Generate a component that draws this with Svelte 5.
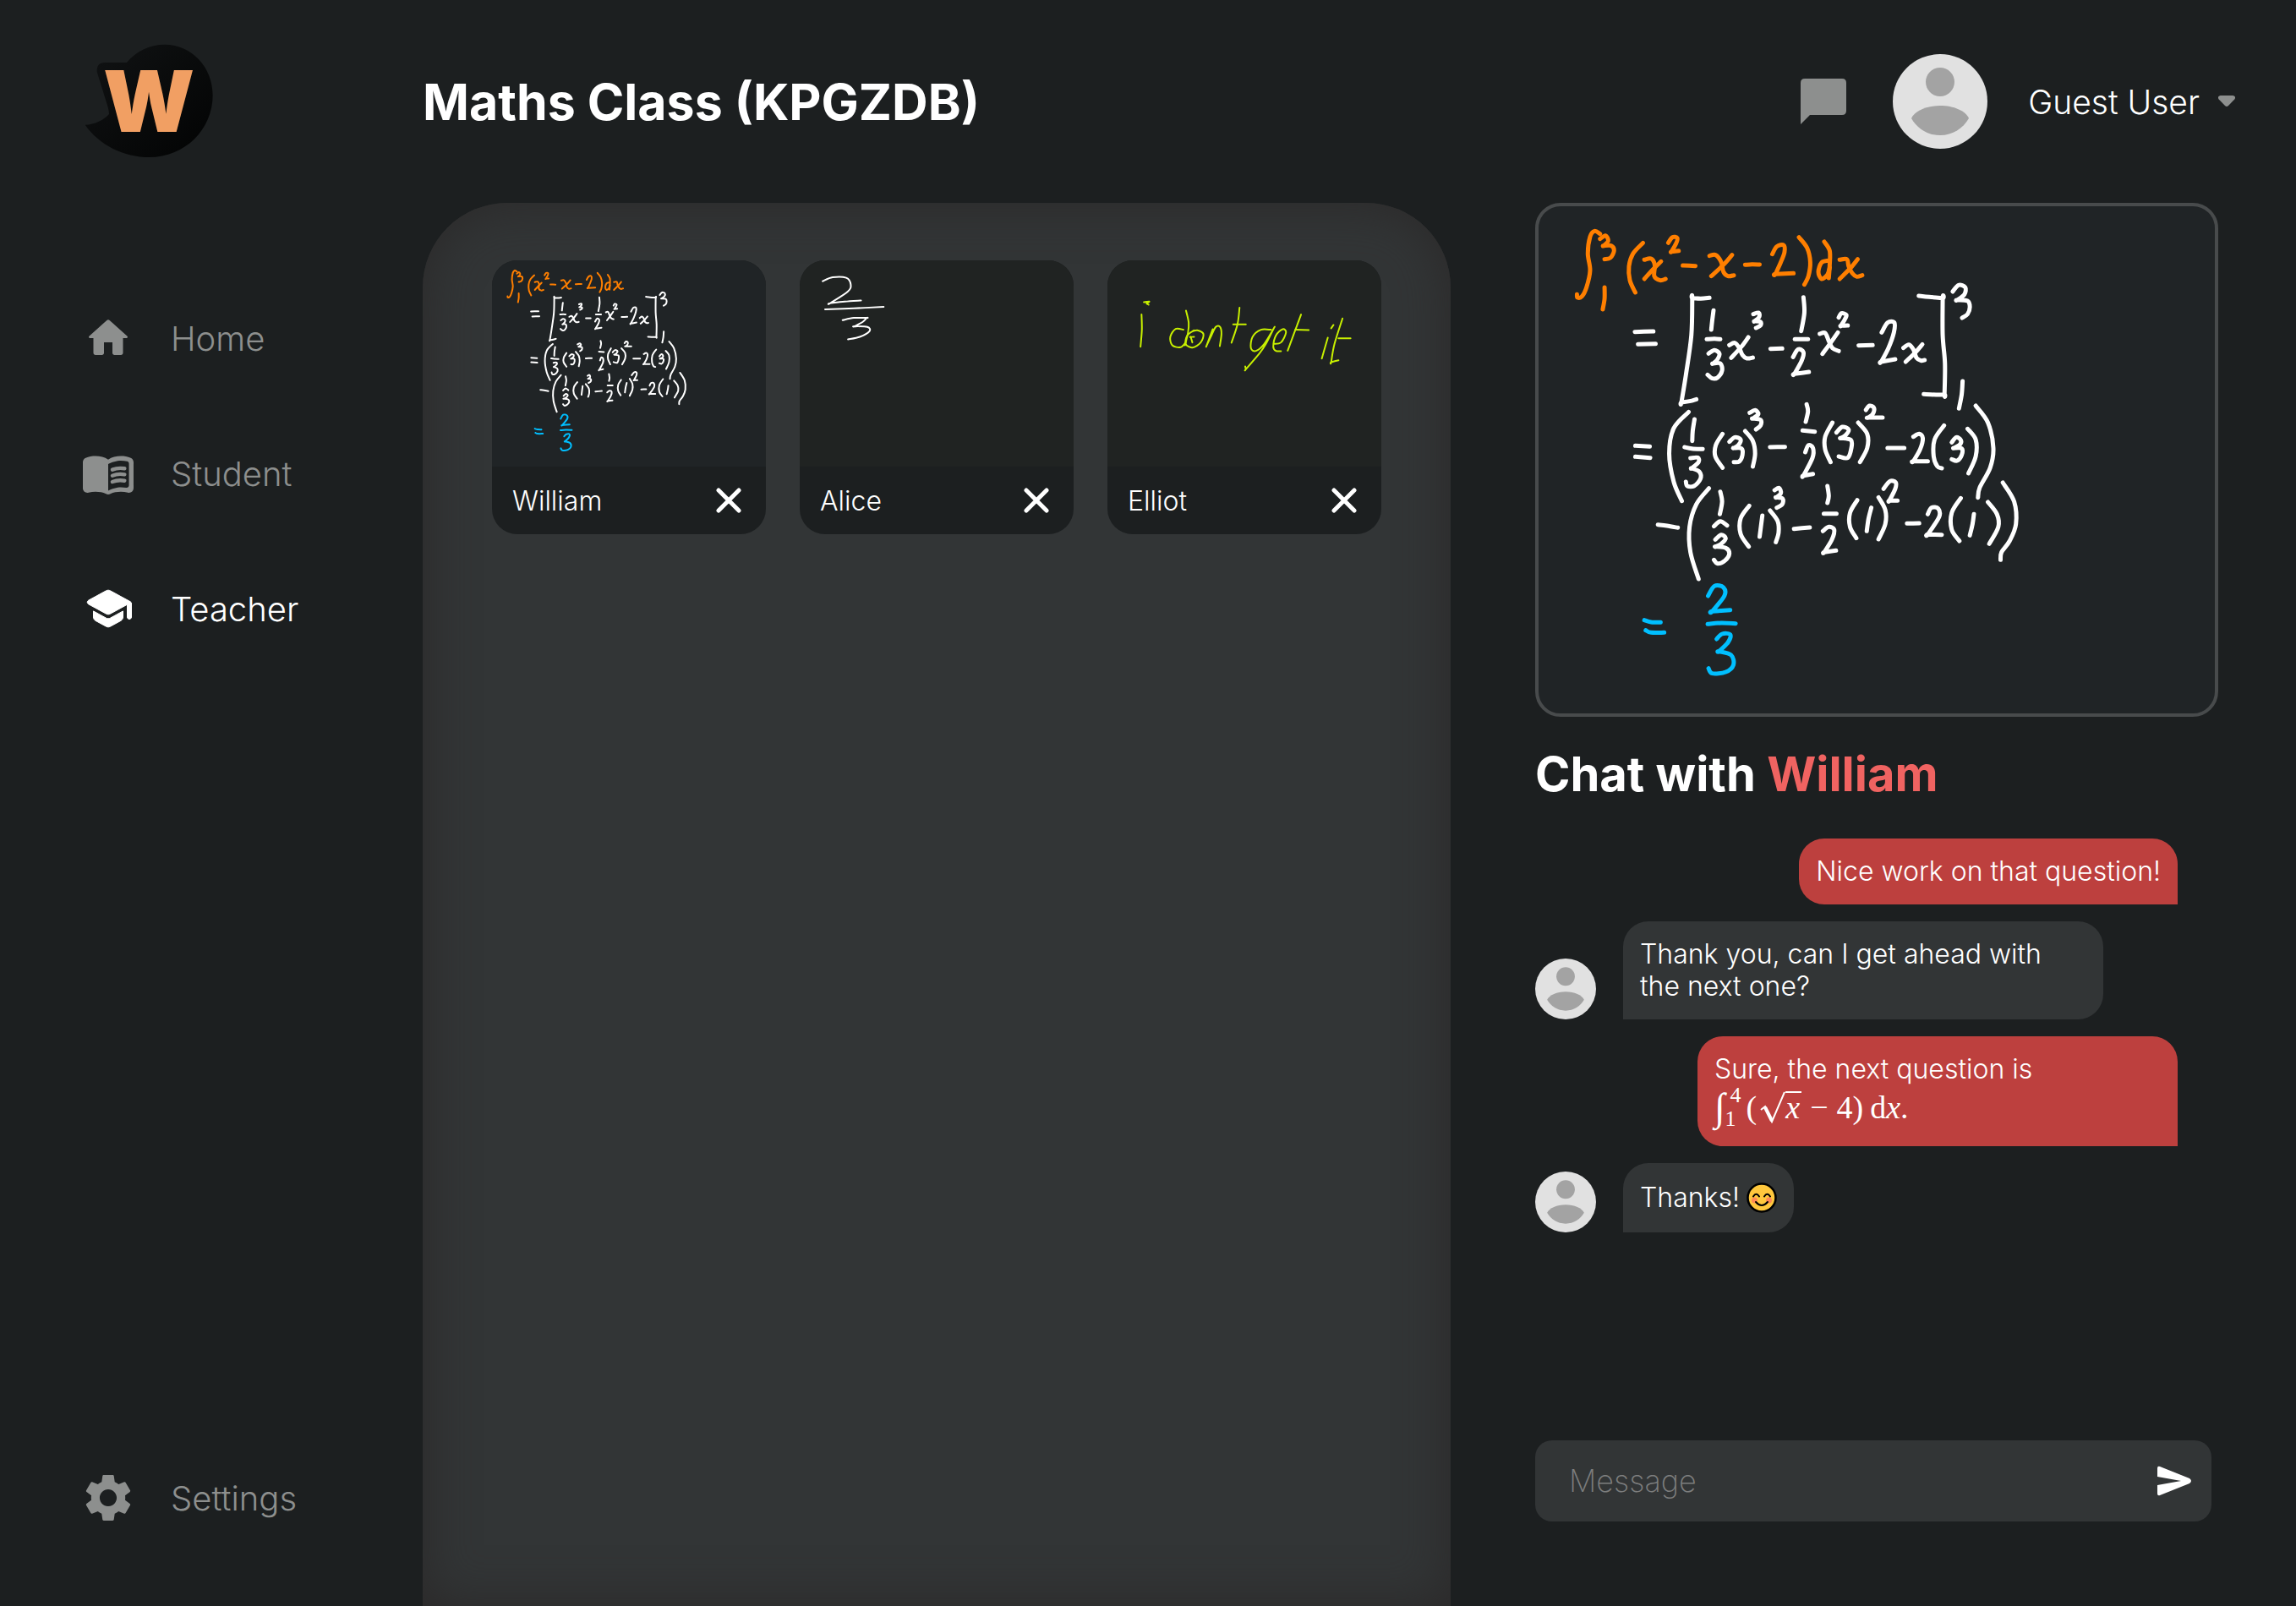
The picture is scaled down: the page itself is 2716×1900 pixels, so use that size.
<script>
  // Ink strokes are space separated "x,y" points; a doubled point makes a sharp corner.
  const williamInk = [
    {
      colour: 'orange',
      strokes: [
        '172,140 160,130 150,150 145,210 150,270 142,330 132,362 122,366 121,355',
        '172,158 184,146 190,165 180,182 180,182 197,182 203,200 195,225 182,230',
        '182,330 182,370 178,408',
        '267,172 245,210 236,255 238,305 250,348',
        '270,232 285,228 293,250 292,290 305,305 317,300',
        '307,238 290,265 270,300',
        '323,172 332,152 343,155 340,175 330,203 330,203 346,200',
        '355,252 383,254',
        '414,218 428,215 440,240 445,275 455,290 468,287',
        '464,215 445,250 418,290',
        '493,250 508,248 525,249',
        '553,212 563,185 578,180 580,205 572,240 560,283 560,283 600,280',
        '612,152 630,190 637,240 633,290 624,320',
        '668,168 680,200 680,250 678,297',
        '677,235 662,242 655,275 662,300 675,285 680,260',
        '702,232 718,230 722,255 730,280 740,292 752,287',
        '742,230 728,258 702,300'
      ]
    },
    {
      colour: 'white',
      strokes: [
        '249,488 290,486', '256,532 295,530',
        '414,367 395,370 376,368 376,368 374,500 362,640 352,738 352,738 370,734 385,727',
        '423,412 420,450 418,480', '408,514 425,512 438,514',
        '412,565 425,553 436,565 432,585 422,600 422,600 438,600 442,625 432,650 420,653 410,640',
        '458,535 470,527 480,545 487,570 497,582 510,579', '500,507 485,540 462,580',
        '511,425 523,420 524,435 514,450 514,450 527,452 527,465 517,474',
        '549,548 575,547',
        '622,365 624,420 617,485', '603,514 632,514',
        '599,577 610,550 622,560 618,590 602,637 602,637 634,630',
        '658,495 670,492 678,520 686,545 700,556', '698,490 685,520 664,566',
        '700,437 706,422 717,428 713,445 705,466 705,466 720,465',
        '744,536 775,535',
        '795,490 808,455 823,455 822,490 810,545 794,594 794,594 825,585',
        '843,545 855,533 865,550 872,580 882,590 890,588', '885,532 870,560 848,594',
        '877,360 900,364 930,368 930,368 930,500 935,600 934,710 934,710 915,711 888,709',
        '952,345 965,322 980,330 978,355 962,375 962,375 985,378 990,400 985,425 973,438',
        '974,663 972,710 966,760',

        '250,892 282,895', '250,931 283,935',
        '368,772 335,830 325,920 335,1020 353,1088',
        '381,798 377,840 376,875', '359,897 375,902 399,904',
        '372,936 388,934 390,950 375,972 375,972 392,985 394,1010 380,1035 365,1035 362,1020',
        '443,850 428,890 427,930 443,970',
        '458,878 470,862 483,870 478,890 468,900 468,900 485,902 487,925 480,948 468,950',
        '493,840 510,875 515,920 510,966',
        '503,775 515,766 522,780 510,795 510,795 527,800 527,820 517,834',
        '548,897 581,896',
        '629,745 632,770 627,807', '620,838 647,842',
        '626,915 633,890 643,900 642,935 622,998 622,998 643,992',
        '686,810 670,860 670,905 682,950',
        '695,845 708,825 722,835 715,855 705,865 705,865 727,872 728,900 720,935 700,930',
        '743,810 763,850 763,900 747,950',
        '760,765 768,750 778,758 775,780 765,792 765,792 797,792',
        '808,900 845,900',
        '865,860 878,850 886,865 880,905 865,947 865,947 897,947',
        '933,820 912,870 910,930 918,965 928,972',
        '950,880 960,862 970,872 968,888 955,900 955,900 972,902 972,925 962,945 950,940',
        '985,832 1003,870 1003,930 987,990',
        '1003,750 1030,810 1042,900 1035,970 1012,1040 1008,1076',

        '300,1172 320,1176 344,1183',
        '413,1043 385,1100 370,1180 372,1270 390,1365',
        '438,1055 442,1090 437,1135', '424,1178 438,1160 453,1175',
        '427,1225 440,1208 450,1220 440,1240 428,1250 428,1250 450,1255 458,1275 448,1300 432,1310 424,1297',
        '502,1105 483,1150 483,1205 501,1250', '531,1140 525,1215',
        '548,1122 565,1160 567,1200 561,1234',
        '558,1050 568,1042 572,1060 562,1075 562,1075 576,1080 575,1100 563,1112',
        '601,1187 636,1182',
        '675,1035 678,1070 675,1095', '667,1133 695,1133',
        '665,1195 678,1180 690,1190 685,1225 668,1270 668,1270 694,1264',
        '741,1085 725,1130 725,1180 739,1220', '772,1112 766,1150 762,1195',
        '788,1075 803,1120 803,1170 788,1224',
        '799,1045 813,1018 826,1022 825,1045 812,1087 812,1087 830,1087',
        '851,1168 878,1167',
        '897,1135 905,1112 920,1115 922,1145 897,1207 897,1207 928,1208',
        '970,1078 950,1130 950,1190 967,1230', '999,1135 996,1170 990,1210',
        '1030,1092 1050,1135 1053,1180 1033,1240',
        '1063,1023 1088,1090 1092,1170 1078,1230 1060,1270 1058,1297'
      ]
    },
    {
      colour: 'blue',
      strokes: [
        '270,1511 285,1518 306,1519', '273,1547 285,1555 314,1555',
        '411,1425 425,1390 445,1395 447,1425 420,1480 420,1480 460,1475',
        '410,1525 440,1521 472,1523',
        '430,1578 442,1560 460,1562 455,1590 435,1622 435,1622 462,1635 467,1670 450,1695 420,1700 412,1682'
      ]
    }
  ];

  const aliceInk = [
    {
      colour: 'white',
      strokes: [
        '1157,128 1190,114 1235,116 1250,140 1240,165 1182,206 1182,206 1230,200 1284,196',
        '1165,228 1260,224 1359,219',
        '1223,266 1260,258 1303,258 1303,258 1290,272 1262,288 1262,288 1305,290 1312,305 1280,325 1241,334'
      ]
    }
  ];

  const elliotInk = [
    {
      colour: 'lime',
      strokes: [
        '590,202 606,200 598,207 604,211', '583,246 584,300 580,360',
        '708,300 685,297 669,325 675,355 700,362 715,345', '716,232 724,275 722,310 713,355',
        '740,302 720,320 715,350 735,363 760,345 768,315 750,302 738,305',
        '730,325 735,345', '728,326 740,325',
        '796,298 778,355 778,355 790,325 805,290 818,290 822,315 817,358',
        '876,222 870,280 852,346', '857,281 895,281',
        '970,300 940,300 915,325 910,365 925,375 950,350 978,296 978,296 955,350 935,385 895,440 895,440 893,430',
        '978,350 1000,345 1015,310 1005,298 985,320 977,360 985,375 1000,376',
        '1060,246 1040,310 1020,374', '1043,300 1083,301',
        '1150,295 1157,283', '1140,328 1122,402',
        '1184,260 1160,350 1150,415 1150,415 1172,408', '1172,330 1208,330'
      ]
    }
  ];

  const students = [
    { name: 'William', box: '36 42 1496 1800', ink: williamInk, tone: 'cool' },
    { name: 'Alice', box: '1081 54 907 731', ink: aliceInk, tone: 'warm' },
    { name: 'Elliot', box: '481 54 819 731', ink: elliotInk, tone: 'warm' }
  ];

  // Catmull-Rom spline through the stroke's points, written as cubic Béziers.
  function smooth(stroke) {
    const p = stroke.split(' ').map((pair) => pair.split(',').map(Number));
    let d = `M${p[0][0]} ${p[0][1]}`;
    for (let i = 0; i < p.length - 1; i++) {
      const a = p[i - 1] ?? p[i];
      const b = p[i];
      const c = p[i + 1];
      const e = p[i + 2] ?? c;
      d += `C${b[0] + (c[0] - a[0]) / 6} ${b[1] + (c[1] - a[1]) / 6} ${c[0] - (e[0] - b[0]) / 6} ${c[1] - (e[1] - b[1]) / 6} ${c[0]} ${c[1]}`;
    }
    return d;
  }

  let message = $state('');
</script>

{#snippet board(student)}
  <svg class="ink" viewBox={student.box} preserveAspectRatio="none" role="img" aria-label="{student.name}'s whiteboard">
    {#each student.ink as layer}
      <g class={layer.colour}>
        {#each layer.strokes as stroke}
          <path d={smooth(stroke)} />
        {/each}
      </g>
    {/each}
  </svg>
{/snippet}

{#snippet avatar()}
  <svg class="avatar" viewBox="0 0 112 112" aria-hidden="true">
    <circle cx="56" cy="56" r="56" fill="#e1e1e1" />
    <circle cx="56" cy="33" r="17" fill="#a3a3a3" />
    <path d="M22 76C26 67 40 61 56 61s30 6 34 15C83 88 71 96 56 96S29 88 22 76z" fill="#a3a3a3" />
  </svg>
{/snippet}

<div class="app">
  <aside class="sidebar">
    <a class="logo" href="#home" aria-label="Whiteboard home">
      <svg viewBox="114 90 468 414" aria-hidden="true">
        <defs>
          <linearGradient id="bubble" x1="0" y1="0" x2="1" y2="1">
            <stop offset="0" stop-color="#111314" />
            <stop offset="1" stop-color="#020303" />
          </linearGradient>
        </defs>
        <path fill="url(#bubble)" d="M164 195Q162 162 192 162H270C302 122 350 98 405 98C500 98 575 178 575 278C575 400 475 498 350 498C260 498 172 455 122 383C155 383 190 365 207 345Q207 335 203 320Z" />
        <text x="348" y="409" text-anchor="middle">W</text>
      </svg>
    </a>
    <nav class="nav">
      <a href="#home">
        <svg viewBox="0 0 24 24" aria-hidden="true"><path d="M10 19v-5h4v5c0 .55.45 1 1 1h3c.55 0 1-.45 1-1v-7h1.700c.46 0 .68-.57.33-.87L12.670 3.600c-.38-.34-.96-.34-1.340 0l-8.360 7.530c-.34.3-.13.87.33.87H5v7c0 .55.45 1 1 1h3c.55 0 1-.45 1-1z" /></svg>
        Home
      </a>
      <a href="#student">
        <svg viewBox="1 1 22 22" aria-hidden="true">
          <path d="M17.500 4.500c-1.950 0-4.050.4-5.500 1.500-1.450-1.100-3.550-1.500-5.500-1.500-1.450 0-2.990.22-4.280.79C1.490 5.620 1 6.330 1 7.140v11.280c0 1.300 1.220 2.260 2.480 1.940.98-.25 2.020-.36 3.020-.36 1.560 0 3.220.26 4.560.92.6.3 1.280.3 1.870 0 1.340-.67 3-.92 4.560-.92 1 0 2.040.11 3.020.36 1.260.33 2.480-.63 2.480-1.940V7.140c0-.81-.49-1.520-1.220-1.850-1.280-.57-2.820-.79-4.270-.79zM21 17.230c0 .63-.58 1.090-1.200.98-.75-.14-1.530-.2-2.300-.2-1.700 0-4.150.65-5.500 1.500V8c1.350-.85 3.800-1.500 5.500-1.500.92 0 1.830.09 2.700.28.46.1.8.51.8.98v9.470z" />
          <path class="lines" d="M13.800 10.400c1.700-.7 3.600-.8 5.300-.5M13.800 13c1.700-.7 3.600-.8 5.300-.5M13.800 15.700c1.700-.7 3.600-.8 5.300-.5" />
        </svg>
        Student
      </a>
      <a href="#teacher" class="active" aria-current="page">
        <svg viewBox="0 0 24 24" aria-hidden="true"><path d="M5 13.180v2.810c0 .73.4 1.410 1.040 1.760l5 2.730c.6.33 1.320.33 1.920 0l5-2.730c.64-.35 1.040-1.030 1.040-1.760v-2.810l-6.040 3.300c-.6.33-1.320.33-1.920 0L5 13.180zm6.040-9.660l-8.430 4.600c-.69.38-.69 1.380 0 1.760l8.430 4.600c.6.33 1.320.33 1.920 0L21 10.090V16c0 .55.45 1 1 1s1-.45 1-1V9.590c0-.37-.2-.7-.52-.88l-9.520-5.190c-.6-.32-1.320-.32-1.920 0z" stroke="currentColor" stroke-width=".4" /></svg>
        Teacher
      </a>
      <a href="#settings" class="last">
        <svg viewBox="1.300 1.300 21.400 21.400" aria-hidden="true"><path d="M19.140 12.940c.04-.3.06-.61.06-.94 0-.32-.02-.64-.07-.94l2.030-1.580c.18-.14.23-.41.12-.61l-1.920-3.320c-.12-.22-.37-.29-.59-.22l-2.390.96c-.5-.38-1.030-.7-1.620-.94l-.36-2.540c-.04-.24-.24-.41-.48-.41h-3.840c-.24 0-.43.17-.47.41l-.36 2.540c-.59.24-1.130.57-1.620.94l-2.390-.96c-.22-.08-.47 0-.59.22L2.740 8.870c-.12.21-.08.47.12.61l2.030 1.580c-.05.3-.09.63-.09.94s.02.64.07.94l-2.030 1.580c-.18.14-.23.41-.12.61l1.920 3.320c.12.22.37.29.59.22l2.390-.96c.5.38 1.030.7 1.620.94l.36 2.540c.05.24.24.41.48.41h3.840c.24 0 .44-.17.47-.41l.36-2.540c.59-.24 1.130-.56 1.620-.94l2.390.96c.22.08.47 0 .59-.22l1.920-3.320c.12-.22.07-.47-.12-.61l-2.010-1.580zM12 15.600c-1.980 0-3.600-1.620-3.600-3.600s1.620-3.600 3.600-3.600 3.600 1.620 3.600 3.600-1.620 3.600-3.600 3.600z" /></svg>
        Settings
      </a>
    </nav>
  </aside>

  <div class="page">
    <header class="topbar">
      <h1>Maths Class (KPGZDB)</h1>
      <div class="account">
        <button class="chat-toggle" aria-label="Chat">
          <svg viewBox="0 0 54 54" aria-hidden="true"><path d="M5 0h44q5 0 5 5v33q0 5-5 5H11L0 54V5q0-5 5-5z" /></svg>
        </button>
        <button class="user">
          {@render avatar()}
          <span>Guest User</span>
          <svg class="caret" viewBox="0 0 20 14" aria-hidden="true"><path d="M2.500 0h15q4 1 1.800 4.500L12 12q-2 2-4 0L.7 4.500Q-1.500 1 2.500 0z" /></svg>
        </button>
      </div>
    </header>

    <main class="content">
      <section class="boards" aria-label="Student whiteboards">
        {#each students as student}
          <article class="card">
            <div class="thumb {student.tone}">{@render board(student)}</div>
            <footer>
              <span>{student.name}</span>
              <button aria-label="Remove {student.name}">
                <svg viewBox="0 0 30 30" aria-hidden="true"><path d="M3 3l24 24M27 3L3 27" /></svg>
              </button>
            </footer>
          </article>
        {/each}
      </section>

      <section class="side">
        <div class="preview cool">{@render board(students[0])}</div>
        <h2>Chat with <em>William</em></h2>
        <div class="messages">
          <p class="bubble mine">Nice work on that question!</p>
          <div class="theirs">
            {@render avatar()}
            <p class="bubble">Thank you, can I get ahead with the next one?</p>
          </div>
          <p class="bubble mine">
            Sure, the next question is
            <span class="math">
              <span class="int">∫</span><span class="limits"><span class="upper">4</span><span>1</span></span>
              <span>(</span>
              <svg class="surd" viewBox="0 0 30 38" aria-label="square root"><path d="M1 22l5-4 8 18L29 1" /><path class="thick" d="M6 19l8 16" /></svg>
              <span class="radicand"><i>x</i></span>
              <span class="minus">−</span>
              <span>4)</span>
              <span class="diff">d<i>x</i>.</span>
            </span>
          </p>
          <div class="theirs">
            {@render avatar()}
            <p class="bubble emoji-line">
              Thanks!
              <svg class="emoji" viewBox="0 0 36 36" role="img" aria-label="smiling face">
                <circle cx="18" cy="18" r="16.500" fill="#ffc83d" stroke="#000" stroke-width="2.500" />
                <circle cx="9.500" cy="21" r="3.500" fill="#ff8a55" />
                <circle cx="26.500" cy="21" r="3.500" fill="#ff8a55" />
                <path d="M8 16.500q3.500-5.500 7 0M21 16.500q3.500-5.500 7 0M11 23q7 8 14 0" fill="none" stroke="#000" stroke-width="2" stroke-linecap="round" />
              </svg>
            </p>
          </div>
        </div>
        <form class="composer" onsubmit={(event) => event.preventDefault()}>
          <input type="text" placeholder="Message" aria-label="Message" bind:value={message} />
          <button aria-label="Send">
            <svg viewBox="0 0 40 36" aria-hidden="true"><path d="M0 3Q0 0 3 1l35 14q4 3 0 6L3 35q-3 1-3-2V23l28-5L0 13z" /></svg>
          </button>
        </form>
      </section>
    </main>
  </div>
</div>

<style>
  :global(body) {
    margin: 0;
    background: #1c1f20;
  }

  .app {
    display: grid;
    grid-template-columns: 500px minmax(0, 1fr);
    min-height: 100vh;
    color: #fff;
    background: #1c1f20;
    font-family: Inter, 'Open Sans', sans-serif;
    font-weight: 300;
    font-size: 32px;
  }

  button {
    padding: 0;
    border: 0;
    background: none;
    color: inherit;
    font: inherit;
    cursor: pointer;
  }

  svg {
    display: block;
    flex: none;
  }

  h1,
  h2,
  p {
    margin: 0;
  }

  .sidebar {
    display: flex;
    flex-direction: column;
    padding: 50px 0 98px 98px;
  }

  .logo svg {
    width: 156px;
    height: 138px;
  }

  .logo text {
    fill: #f19f63;
    font-family: Inter, sans-serif;
    font-size: 300px;
    font-weight: 900;
  }

  .nav {
    flex: 1;
    display: flex;
    flex-direction: column;
    gap: 100px;
    padding-top: 182px;
  }

  .nav a {
    display: flex;
    align-items: center;
    gap: 44px;
    height: 60px;
    color: #8d8f8e;
    font-size: 40px;
    text-decoration: none;
  }

  .nav svg {
    width: 60px;
    height: 60px;
    fill: currentColor;
  }

  .nav .lines {
    fill: none;
    stroke: currentColor;
    stroke-width: 1.6;
    stroke-linecap: round;
  }

  .nav .active {
    color: #fff;
  }

  .nav .last {
    margin-top: auto;
  }

  .page {
    display: flex;
    flex-direction: column;
  }

  .topbar {
    display: flex;
    align-items: center;
    justify-content: space-between;
    height: 240px;
    padding-right: 72px;
  }

  h1 {
    font-size: 59px;
    font-weight: 700;
  }

  .account,
  .user {
    display: flex;
    align-items: center;
  }

  .account {
    gap: 55px;
  }

  .chat-toggle svg {
    width: 54px;
    height: 54px;
    fill: #8d8f8e;
  }

  .user {
    font-size: 39px;
  }

  .user .avatar {
    width: 112px;
    height: 112px;
    margin-right: 48px;
  }

  .caret {
    width: 20px;
    height: 14px;
    margin-left: 22px;
    fill: #8d8f8e;
  }

  .content {
    flex: 1;
    display: grid;
    grid-template-columns: minmax(0, 1fr) 808px;
    gap: 100px;
    padding-right: 92px;
  }

  .boards {
    display: grid;
    grid-template-columns: repeat(3, minmax(0, 1fr));
    align-content: start;
    gap: 40px;
    padding: 68px 82px;
    border-radius: 100px 100px 0 0;
    background: #323536;
    box-shadow: inset 0 0 60px #2b2929;
  }

  .card {
    overflow: hidden;
    border-radius: 30px;
    background: #1c1f20;
  }

  .thumb {
    height: 244px;
  }

  .cool {
    background: #202426;
  }

  .warm {
    background: #202322;
  }

  .ink {
    width: 100%;
    height: 100%;
    fill: none;
    stroke-width: 2px;
    stroke-linecap: round;
    stroke-linejoin: round;
  }

  .ink path {
    vector-effect: non-scaling-stroke;
  }

  .ink .orange {
    stroke: #ff7f00;
  }

  .ink .white {
    stroke: #fff;
  }

  .ink .blue {
    stroke: #00bfff;
  }

  .ink .lime {
    stroke: #c8f000;
  }

  .card footer {
    display: flex;
    align-items: center;
    justify-content: space-between;
    height: 80px;
    padding: 0 29px 0 24px;
  }

  .card footer svg {
    width: 30px;
    height: 30px;
    stroke: #fff;
    stroke-width: 5px;
    stroke-linecap: round;
  }

  .side {
    display: flex;
    flex-direction: column;
    padding-bottom: 100px;
  }

  .preview {
    box-sizing: border-box;
    height: 608px;
    border: 4px solid #484b4c;
    border-radius: 30px;
    overflow: hidden;
  }

  .preview .ink {
    stroke-width: 5px;
  }

  h2 {
    margin-top: 32px;
    font-size: 56px;
    line-height: 72px;
    font-weight: 700;
  }

  em {
    color: #f06361;
    font-style: normal;
  }

  .messages {
    flex: 1;
    display: flex;
    flex-direction: column;
    align-items: flex-start;
    gap: 20px;
    padding: 40px 48px 0 0;
  }

  .bubble {
    box-sizing: border-box;
    max-width: 568px;
    padding: 20px;
    border-radius: 30px 30px 30px 0;
    background: #323536;
    line-height: 38px;
  }

  .mine {
    align-self: flex-end;
    border-radius: 30px 30px 0 30px;
    background: #bd403e;
  }

  .theirs {
    display: flex;
    align-items: flex-end;
    gap: 32px;
  }

  .theirs .avatar {
    width: 72px;
    height: 72px;
  }

  .math {
    display: inline-flex;
    align-items: center;
    height: 52px;
    vertical-align: middle;
    font-family: 'Liberation Serif', serif;
    font-size: 38px;
    font-weight: 400;
  }

  .int {
    font-size: 46px;
  }

  .limits {
    display: flex;
    flex-direction: column;
    margin-right: 6px;
    font-size: 26px;
    line-height: 28px;
  }

  .upper {
    padding-left: 6px;
  }

  .surd {
    width: 30px;
    height: 38px;
    margin-left: 4px;
    fill: none;
    stroke: #fff;
    stroke-width: 2px;
  }

  .surd .thick {
    stroke-width: 4px;
  }

  .radicand {
    height: 36px;
    padding-right: 2px;
    border-top: 2px solid #fff;
    line-height: 34px;
  }

  .minus {
    margin: 0 10px;
  }

  .diff {
    margin-left: 8px;
  }

  .emoji-line {
    display: flex;
    align-items: center;
    gap: 8px;
    height: 82px;
  }

  .emoji {
    width: 36px;
    height: 36px;
  }

  .composer {
    display: flex;
    align-items: center;
    height: 96px;
    margin-right: 8px;
    padding: 0 24px 0 40px;
    border-radius: 20px;
    background: #323536;
  }

  .composer input {
    flex: 1;
    min-width: 0;
    padding: 0;
    border: 0;
    outline: 0;
    background: none;
    color: #fff;
    font: inherit;
    font-size: 36px;
    font-weight: 200;
  }

  .composer input::placeholder {
    color: #7d7e7e;
    opacity: 1;
  }

  .composer svg {
    width: 40px;
    height: 36px;
    fill: #fff;
  }
</style>
